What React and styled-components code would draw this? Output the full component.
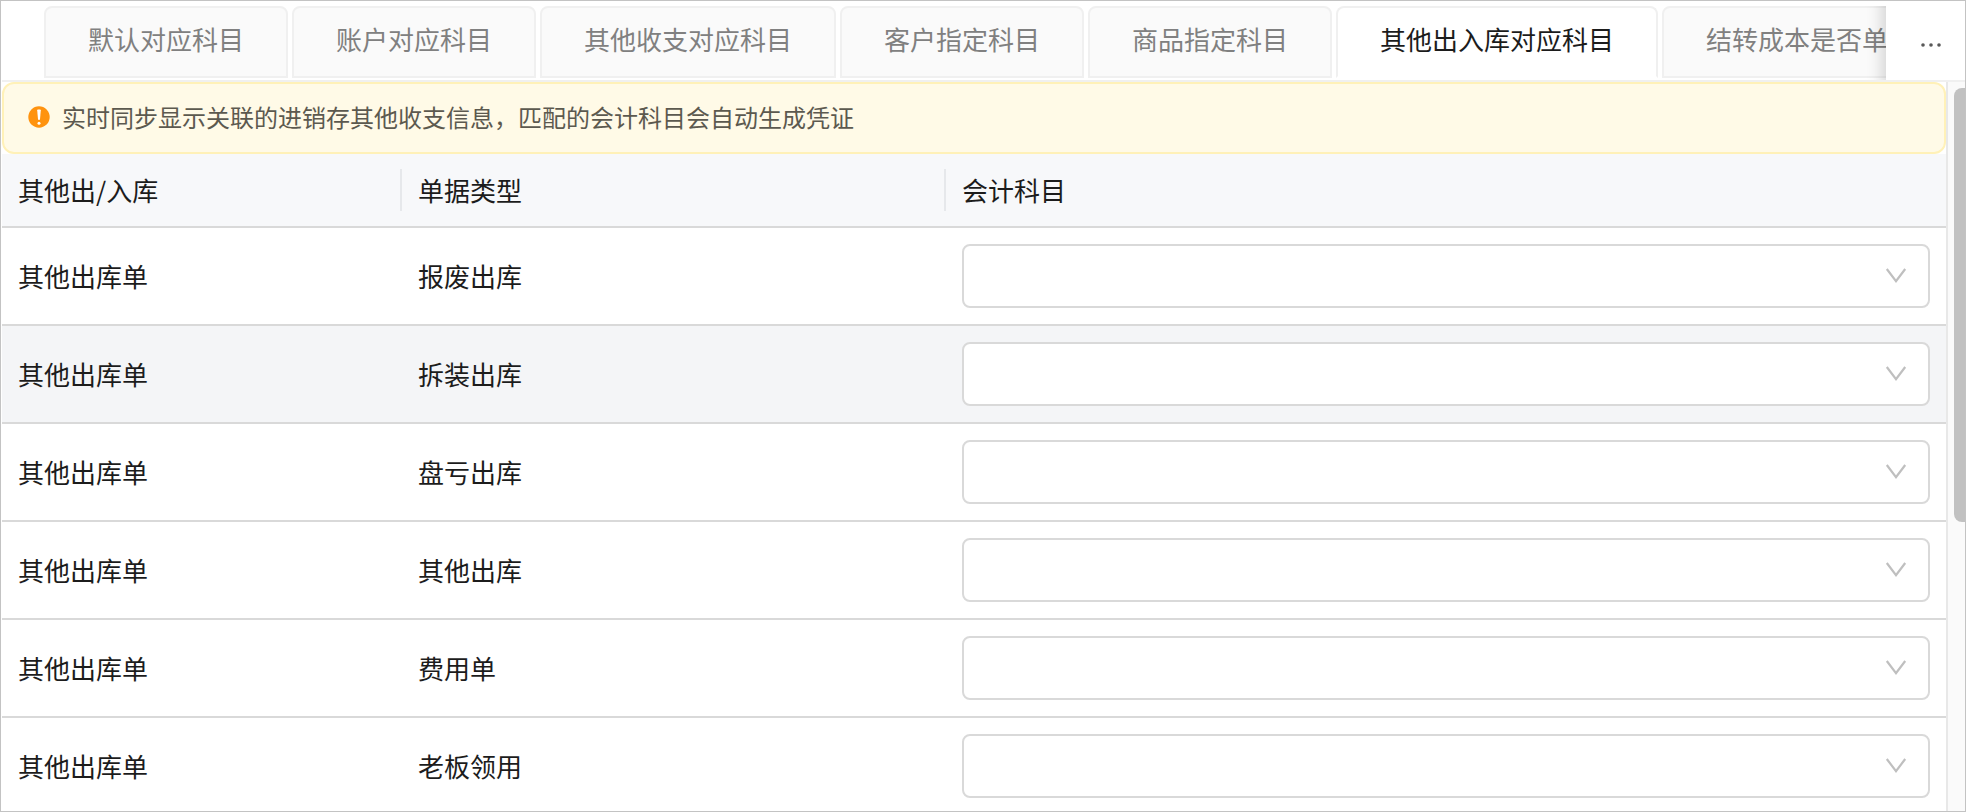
import { useState } from "react";
import styled, { createGlobalStyle } from "styled-components";

const GlobalStyle = createGlobalStyle`
  *,
  *::before,
  *::after {
    box-sizing: border-box;
  }

  body {
    margin: 0;
    color: #1c1c1c;
    background: #fff;
    font-family: "Noto Sans CJK SC", sans-serif;
    font-size: 26px;
    line-height: 40px;
  }

  button,
  select {
    font: inherit;
    color: inherit;
  }
`;

const Page = styled.div`
  display: flex;
  flex-direction: column;
  height: 100vh;
  overflow: hidden;
  border: 1px solid #c3c3c3;
  padding: 1px 0 0 1px;
`;

const TabBar = styled.div`
  display: flex;
  flex: none;
  border-bottom: 2px solid #f0f0f0;
`;

const TabScroller = styled.div`
  position: relative;
  flex: 1;
  min-width: 0;
  overflow: hidden;

  &::after {
    content: "";
    position: absolute;
    top: 4px;
    right: 0;
    bottom: 0;
    width: 60px;
    box-shadow: inset -20px 0 16px -16px rgba(0, 0, 0, 0.16);
    pointer-events: none;
  }
`;

const TabList = styled.div`
  display: flex;
  gap: 4px;
  padding: 4px 0 2px 42px;
`;

const Tab = styled.button`
  flex: none;
  height: 72px;
  padding: 0 42px 6px;
  border: 2px solid #f0f0f0;
  border-bottom-color: ${(props) => (props.$active ? "#fff" : "#f0f0f0")};
  border-radius: 8px 8px 0 0;
  background: ${(props) => (props.$active ? "#fff" : "#fafafa")};
  color: ${(props) => (props.$active ? "#1c1c1c" : "#808080")};
  white-space: nowrap;
  cursor: pointer;
`;

const MoreButton = styled.button`
  display: flex;
  align-items: center;
  justify-content: center;
  flex: none;
  width: 79px;
  padding: 8px 0 0 10px;
  border: none;
  background: #fff;
  cursor: pointer;
`;

const Body = styled.div`
  display: flex;
  flex: 1;
  min-height: 0;
`;

const Content = styled.div`
  flex: 1;
  min-width: 0;
  overflow: hidden;
`;

const Notice = styled.div`
  display: flex;
  align-items: center;
  gap: 12px;
  height: 72px;
  padding: 0 24px 2px;
  border: 2px solid #fff1b8;
  border-radius: 12px;
  background: #fffae7;
  color: #5c594f;
  font-size: 24px;
`;

const Table = styled.table`
  width: 100%;
  table-layout: fixed;
  border-collapse: separate;
  border-spacing: 0;
`;

const HeadCell = styled.th`
  width: ${(props) => props.$width || "auto"};
  height: 74px;
  padding: 0;
  border-bottom: 2px solid #d9d9d9;
  background: #f7f8fa;
  font-weight: 400;
  text-align: left;
`;

const HeadLabel = styled.div`
  height: 42px;
  padding: 0 16px;
  border-right: ${(props) => (props.$last ? "none" : "2px solid #e6e8eb")};
  line-height: 42px;
`;

const Row = styled.tr`
  background: ${(props) => (props.$hovered ? "#f4f5f7" : "#fff")};
`;

const Cell = styled.td`
  height: 98px;
  padding: 0 16px;
  border-bottom: 2px solid #d9d9d9;
`;

const SelectBox = styled.div`
  position: relative;
`;

const Select = styled.select`
  display: block;
  width: 100%;
  height: 64px;
  padding: 0 60px 0 20px;
  border: 2px solid #d9d9d9;
  border-radius: 8px;
  background: #fff;
  appearance: none;
`;

const Arrow = styled.svg`
  position: absolute;
  top: 24px;
  right: 23px;
  pointer-events: none;
`;

const ScrollTrack = styled.div`
  flex: none;
  width: 19px;
  padding: 6px 0 0 6px;
  border-left: 2px solid #e8e8e8;
  background: #fafafa;
`;

const ScrollThumb = styled.div`
  height: 60%;
  border-radius: 8px 0 0 8px;
  background: #c1c1c1;
`;

const tabs = [
  "默认对应科目",
  "账户对应科目",
  "其他收支对应科目",
  "客户指定科目",
  "商品指定科目",
  "其他出入库对应科目",
  "结转成本是否单",
];

const rows = [
  { order: "其他出库单", type: "报废出库" },
  { order: "其他出库单", type: "拆装出库", hovered: true },
  { order: "其他出库单", type: "盘亏出库" },
  { order: "其他出库单", type: "其他出库" },
  { order: "其他出库单", type: "费用单" },
  { order: "其他出库单", type: "老板领用" },
];

function WarningIcon() {
  return (
    <svg width="22" height="22" viewBox="0 0 22 22" aria-hidden="true">
      <circle cx="11" cy="11" r="10.7" fill="#ff930f" />
      <path
        d="M9.2 4.2Q9.2 3.4 10 3.4h2q.8 0 .8.8l-.8 9q-.1.7-1 .7t-1-.7z"
        fill="#fff"
      />
      <circle cx="11" cy="17.2" r="1.5" fill="#fff" />
    </svg>
  );
}

function SubjectSelect({ label }) {
  return (
    <SelectBox>
      <Select aria-label={label} defaultValue="">
        <option value=""></option>
      </Select>
      <Arrow width="22" height="16" viewBox="0 0 22 16" aria-hidden="true">
        <path
          d="M1.8 1 11 13.2 20.2 1"
          fill="none"
          stroke="#bfbfbf"
          strokeWidth="2.2"
        />
      </Arrow>
    </SelectBox>
  );
}

function App() {
  const [active, setActive] = useState(5);

  return (
    <>
      <GlobalStyle />
      <Page>
        <TabBar>
          <TabScroller>
            <TabList role="tablist">
              {tabs.map((tab, i) => (
                <Tab
                  key={tab}
                  role="tab"
                  aria-selected={i === active}
                  $active={i === active}
                  onClick={() => setActive(i)}
                >
                  {tab}
                </Tab>
              ))}
            </TabList>
          </TabScroller>
          <MoreButton aria-label="更多">
            <svg width="20" height="4" viewBox="0 0 20 4" fill="#595959">
              <circle cx="2" cy="2" r="1.8" />
              <circle cx="10" cy="2" r="1.8" />
              <circle cx="18" cy="2" r="1.8" />
            </svg>
          </MoreButton>
        </TabBar>

        <Body>
          <Content>
            <Notice role="alert">
              <WarningIcon />
              实时同步显示关联的进销存其他收支信息，匹配的会计科目会自动生成凭证
            </Notice>
            <Table>
              <thead>
                <tr>
                  <HeadCell $width="400px">
                    <HeadLabel>其他出/入库</HeadLabel>
                  </HeadCell>
                  <HeadCell $width="544px">
                    <HeadLabel>单据类型</HeadLabel>
                  </HeadCell>
                  <HeadCell>
                    <HeadLabel $last>会计科目</HeadLabel>
                  </HeadCell>
                </tr>
              </thead>
              <tbody>
                {rows.map((row) => (
                  <Row key={row.type} $hovered={row.hovered}>
                    <Cell>{row.order}</Cell>
                    <Cell>{row.type}</Cell>
                    <Cell>
                      <SubjectSelect label={`${row.type} 会计科目`} />
                    </Cell>
                  </Row>
                ))}
              </tbody>
            </Table>
          </Content>
          <ScrollTrack>
            <ScrollThumb />
          </ScrollTrack>
        </Body>
      </Page>
    </>
  );
}

export default App;
